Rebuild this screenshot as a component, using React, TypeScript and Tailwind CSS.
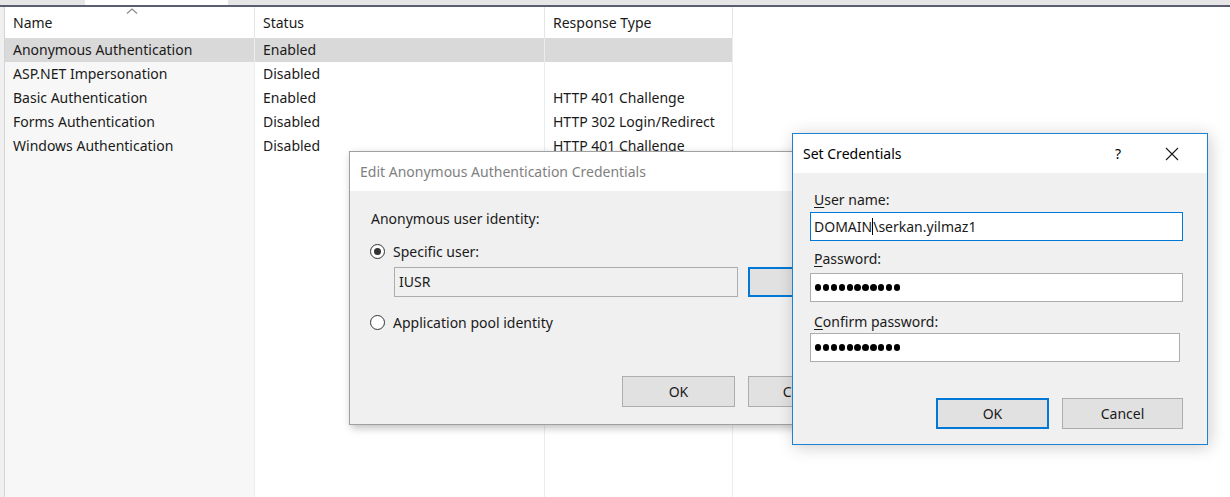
import React from 'react';

type Row = { name: string; status: string; response: string };

const rows: Row[] = [
  { name: 'Anonymous Authentication', status: 'Enabled', response: '' },
  { name: 'ASP.NET Impersonation', status: 'Disabled', response: '' },
  { name: 'Basic Authentication', status: 'Enabled', response: 'HTTP 401 Challenge' },
  { name: 'Forms Authentication', status: 'Disabled', response: 'HTTP 302 Login/Redirect' },
  { name: 'Windows Authentication', status: 'Disabled', response: 'HTTP 401 Challenge' },
];

const Dots: React.FC = () => (
  <div className="flex items-center gap-[1.6px]">
    {Array.from({ length: 11 }).map((_, i) => (
      <span key={i} className="w-[6.3px] h-[6.3px] rounded-full bg-black" />
    ))}
  </div>
);

const Radio: React.FC<{ checked?: boolean }> = ({ checked }) => (
  <span className="shrink-0 w-[15px] h-[15px] rounded-full border border-[#333333] bg-white flex items-center justify-center">
    {checked && <span className="w-[7px] h-[7px] rounded-full bg-[#333333]" />}
  </span>
);

const Column: React.FC<{
  title: string;
  width: string;
  cells: string[];
  shaded?: boolean;
  sorted?: boolean;
}> = ({ title, width, cells, shaded, sorted }) => (
  <div className={`${width} flex flex-col border-r border-[#e8edf4]`}>
    <div className="relative h-[31px] bg-white flex items-center pl-[8px] border-r border-[#e5e5e5] -mr-px">
      {sorted && (
        <svg className="absolute left-[121px] top-[1px]" width="12" height="6" viewBox="0 0 12 6">
          <path d="M1 5.5 L6 1 L11 5.5" fill="none" stroke="#8a8a8a" strokeWidth="1.2" />
        </svg>
      )}
      <span>{title}</span>
    </div>
    <div className={`flex-1 flex flex-col ${shaded ? 'bg-[#f7f7f7]' : 'bg-white'}`}>
      {cells.map((c, i) => (
        <div
          key={i}
          className={`h-[24px] flex items-center pl-[8px] whitespace-nowrap ${i === 0 ? 'bg-[#d9d9d9]' : ''}`}
        >
          {c}
        </div>
      ))}
    </div>
  </div>
);

export default function App() {
  return (
    <div className="relative w-[1230px] h-[497px] overflow-hidden bg-white text-[14px] text-[#1a1a1a] font-['Noto_Sans','Open_Sans',sans-serif] leading-none">
      {/* tab strip */}
      <div className="h-[7px] bg-[#e6e6e6] border-b-2 border-[#5b5d70] flex">
        <div className="ml-[85px] w-[143px] bg-white" />
      </div>

      {/* feature list */}
      <div className="flex h-[490px]">
        <div className="w-[5px] bg-[#f0f0f0] border-r border-[#d4d4d4]" />
        <Column title="Name" width="w-[250px]" cells={rows.map((r) => r.name)} shaded sorted />
        <Column title="Status" width="w-[290px]" cells={rows.map((r) => r.status)} />
        <Column title="Response Type" width="w-[188px]" cells={rows.map((r) => r.response)} />
        <div className="flex-1" />
      </div>

      {/* Edit Anonymous Authentication Credentials */}
      <div className="absolute left-[349px] top-[151px] w-[470px] h-[274px] border border-[#a0a0a0] bg-[#f0f0f0] shadow-[2px_3px_8px_rgba(0,0,0,0.25)] flex flex-col">
        <div className="h-[39px] bg-white flex items-center pl-[10px] text-[#7f7f7f]">
          Edit Anonymous Authentication Credentials
        </div>
        <div className="flex-1 flex flex-col pl-[20px]">
          <div className="mt-[20px] h-[16px] flex items-center pl-[1px]">Anonymous user identity:</div>
          <div className="mt-[17px] flex items-center gap-[8px]">
            <Radio checked />
            <span>Specific user:</span>
          </div>
          <div className="mt-[8px] flex gap-[10px] pl-[24px]">
            <div className="shrink-0 w-[344px] h-[30px] border border-[#adadad] bg-[#f0f0f0] flex items-center pl-[4px]">
              IUSR
            </div>
            <div className="shrink-0 w-[80px] h-[30px] border-2 border-[#0078d7] bg-[#e1e1e1]" />
          </div>
          <div className="mt-[18px] flex items-center gap-[8px]">
            <Radio />
            <span>Application pool identity</span>
          </div>
          <div className="mt-[46px] flex gap-[13px] pl-[252px]">
            <div className="shrink-0 w-[113px] h-[31px] border border-[#adadad] bg-[#e1e1e1] flex items-center justify-center">
              OK
            </div>
            <div className="shrink-0 w-[113px] h-[31px] border border-[#adadad] bg-[#e1e1e1] flex items-center justify-center">
              Cancel
            </div>
          </div>
        </div>
      </div>

      {/* Set Credentials */}
      <div className="absolute left-[792px] top-[133px] w-[416px] h-[312px] border border-[#1c83d4] bg-[#f0f0f0] shadow-[2px_2px_16px_rgba(0,0,0,0.2)] flex flex-col">
        <div className="h-[39px] bg-white flex items-center pl-[10px] text-[#000000]">
          <span className="flex-1">Set Credentials</span>
          <span className="w-[20px] text-center mr-[37px]">?</span>
          <svg className="mr-[28px]" width="14" height="14" viewBox="0 0 14 14">
            <path d="M1 1 L13 13 M13 1 L1 13" stroke="#1a1a1a" strokeWidth="1.1" />
          </svg>
        </div>
        <div className="flex-1 flex flex-col pl-[17px] pr-[24px]">
          <div className="mt-[19px] pl-[4px] h-[16px] flex items-center">
            <span className="underline underline-offset-2">U</span>ser name:
          </div>
          <div className="mt-[4px] w-[373px] h-[29px] bg-white border border-[#0078d7] flex items-center pl-[3px]">
            DOMAIN
            <span className="inline-block w-px h-[17px] bg-black" />
            \serkan.yilmaz1
          </div>
          <div className="mt-[10px] pl-[4px] h-[16px] flex items-center">
            <span className="underline underline-offset-2">P</span>assword:
          </div>
          <div className="mt-[6px] w-[373px] h-[29px] bg-white border border-[#adadad] flex items-center pl-[4px]">
            <Dots />
          </div>
          <div className="mt-[12px] pl-[4px] h-[16px] flex items-center">
            <span className="underline underline-offset-2">C</span>onfirm password:
          </div>
          <div className="mt-[3px] w-[370px] h-[29px] bg-white border border-[#adadad] flex items-center pl-[4px]">
            <Dots />
          </div>
          <div className="mt-[36px] flex gap-[13px] pl-[126px]">
            <div className="shrink-0 w-[113px] h-[31px] border-2 border-[#0078d7] bg-[#e1e1e1] flex items-center justify-center">
              OK
            </div>
            <div className="shrink-0 w-[121px] h-[31px] border border-[#adadad] bg-[#e1e1e1] flex items-center justify-center">
              Cancel
            </div>
          </div>
        </div>
      </div>
    </div>
  );
}
